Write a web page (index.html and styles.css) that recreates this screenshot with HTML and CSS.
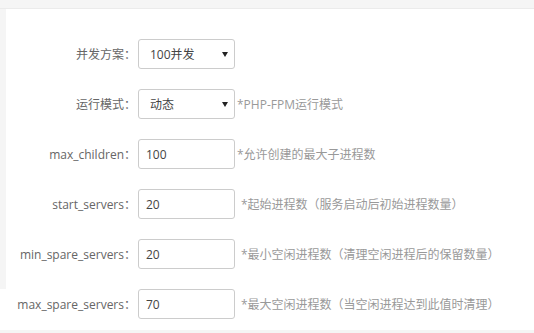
FILE: index.html
```html
<!DOCTYPE html>
<html lang="zh-CN">
    <head>
        <meta charset="utf-8"/>
        <title>PHP性能调整</title>
        <link rel="stylesheet" href="styles.css">
    </head>
    <body>
        <div class="top-bar"></div>
        <div class="panel">
            <div class="line">
                <span class="tname">并发方案：</span>
                <div class="select-box">
                    <select class="bt-select">
                        <option>100并发</option>
                    </select>
                    <span class="arrow"></span>
                </div>
            </div>
            <div class="line">
                <span class="tname">运行模式：</span>
                <div class="select-box">
                    <select class="bt-select">
                        <option>动态</option>
                    </select>
                    <span class="arrow"></span>
                </div>
                <span class="tips">*PHP-FPM运行模式</span>
            </div>
            <div class="line">
                <span class="tname">max_children：</span>
                <input class="bt-input" type="text" value="100">
                <span class="tips">*允许创建的最大子进程数</span>
            </div>
            <div class="line">
                <span class="tname">start_servers：</span>
                <input class="bt-input" type="text" value="20">
                <span class="tips gap">*起始进程数（服务启动后初始进程数量）</span>
            </div>
            <div class="line">
                <span class="tname">min_spare_servers：</span>
                <input class="bt-input" type="text" value="20">
                <span class="tips gap">*最小空闲进程数（清理空闲进程后的保留数量）</span>
            </div>
        </div>
        <div class="panel last">
            <div class="line">
                <span class="tname">max_spare_servers：</span>
                <input class="bt-input" type="text" value="70">
                <span class="tips gap">*最大空闲进程数（当空闲进程达到此值时清理）</span>
            </div>
        </div>
    </body>
</html>
```

FILE: styles.css
```css
html, body {
    margin: 0;
    padding: 0;
    background: #f5f5f5;
    font-family: "Open Sans", "Noto Sans CJK SC", sans-serif;
    font-size: 12px;
    color: #666;
}

.top-bar {
    height: 8px;
    border-bottom: 1px solid #ebebeb;
}

.panel {
    background: #fff;
    margin-left: 6px;
    padding-top: 30px;
    overflow: hidden;
}

.panel.last {
    margin-left: 0;
    padding: 0 0 11px 6px;
}

.line {
    display: flex;
    align-items: center;
    height: 30px;
    margin-bottom: 20px;
}

.panel.last .line {
    margin-bottom: 0;
}

.tname {
    width: 130px;
    text-align: right;
    margin-right: 2px;
    white-space: nowrap;
}

.select-box {
    position: relative;
    width: 97px;
    height: 30px;
}

.bt-select {
    appearance: none;
    -webkit-appearance: none;
    width: 97px;
    height: 30px;
    margin: 0;
    padding: 0 0 0 11px;
    border: 1px solid #ccc;
    border-radius: 3px;
    background: #fff;
    font-family: inherit;
    font-size: 12px;
    color: #444;
    box-sizing: border-box;
}

.select-box .arrow {
    position: absolute;
    right: 7px;
    top: 13px;
    width: 0;
    height: 0;
    border-left: 3px solid transparent;
    border-right: 3px solid transparent;
    border-top: 5px solid #222;
}

.bt-input {
    width: 97px;
    height: 30px;
    margin: 0;
    padding: 0 0 0 7px;
    border: 1px solid #ccc;
    border-radius: 3px;
    font-family: inherit;
    font-size: 12px;
    color: #444;
    box-sizing: border-box;
    outline: none;
}

.tips {
    color: #999;
    margin-left: 2px;
    white-space: nowrap;
}

.tips.gap {
    margin-left: 6px;
}
```
